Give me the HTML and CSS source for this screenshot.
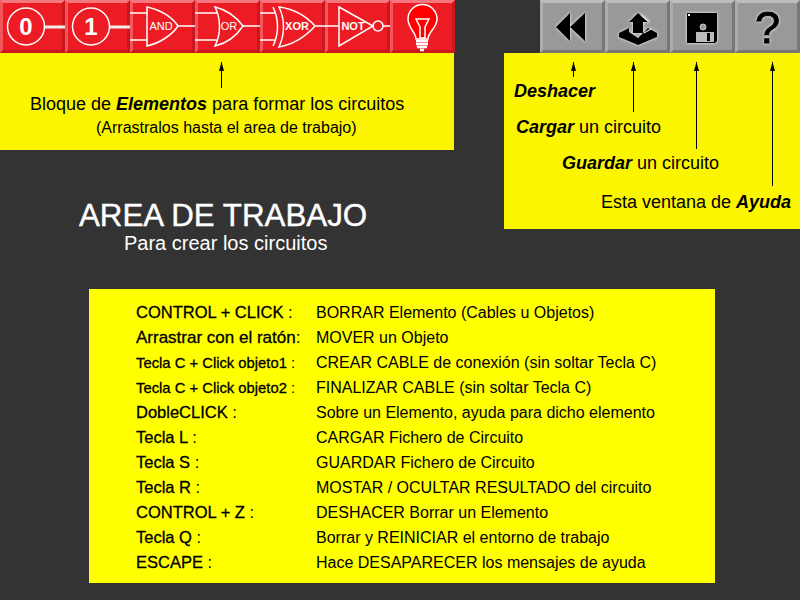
FILE: index.html
```html
<!DOCTYPE html>
<html lang="en">
    <head>
        <meta charset="UTF-8" />
        <title>Circuitos</title>
        <link rel="stylesheet" href="styles.css">
    </head>
    <body>
        <div class="top">
            <div class="left">
                <div class="toolbar">
                    <div class="btn red">
                        <svg class="icon" viewBox="3 3 59 47">
                            <line class="wire thick" x1="45" y1="27" x2="65" y2="27" />
                            <circle class="gate" cx="26" cy="26.5" r="18.5" />
                            <text class="digit" x="26" y="35">0</text>
                        </svg>
                    </div>
                    <div class="btn red">
                        <svg class="icon" viewBox="3 3 59 47">
                            <line class="wire thick" x1="45" y1="27" x2="65" y2="27" />
                            <circle class="gate" cx="26" cy="26.5" r="18.5" />
                            <text class="digit" x="26" y="35">1</text>
                        </svg>
                    </div>
                    <div class="btn red">
                        <svg class="icon" viewBox="3 3 59 47">
                            <path class="wire" d="M0 13H17M0 40H17M48 26H65" />
                            <path class="gate" d="M17 7C30 10 42 17 48 26C42 35 30 43 17 46Z" />
                            <text class="gate-label" x="31" y="30">AND</text>
                        </svg>
                    </div>
                    <div class="btn red">
                        <svg class="icon" viewBox="3 3 59 47">
                            <path class="wire" d="M0 13H23M0 40H23M48 26H65" />
                            <path class="gate" d="M20 7C33 10 42 18 48 26C42 35 33 43 20 46C26 34 26 19 20 7Z" />
                            <text class="gate-label" x="34" y="30">OR</text>
                        </svg>
                    </div>
                    <div class="btn red">
                        <svg class="icon" viewBox="3 3 59 47">
                            <path class="wire" d="M0 13H15M0 40H15M55 26H65" />
                            <path class="gate" d="M13 7C19 19 19 34 13 46" />
                            <path class="gate" d="M19 7C35 9 47 17 55 26C47 35 35 44 19 47C25 34 25 19 19 7Z" />
                            <text class="gate-label strong" x="37" y="30">XOR</text>
                        </svg>
                    </div>
                    <div class="btn red">
                        <svg class="icon" viewBox="3 3 59 47">
                            <path class="wire" d="M0 26H14M58 26H65" />
                            <path class="gate" d="M14 7L48 26L14 46Z" />
                            <circle class="gate" cx="53" cy="26" r="5" />
                            <text class="gate-label strong" x="28" y="30">NOT</text>
                        </svg>
                    </div>
                    <div class="btn red">
                        <svg class="icon" viewBox="3 3 59 47">
                            <path class="bulb" d="M26 39C26 32 18 28 18 19A14.5 14.5 0 0 1 47 19C47 28 38 32 38 39Z" />
                            <path class="filament" d="M26 19H39L35 27V38H30V27Z" />
                            <path class="base" d="M26 41H38M26 44H38M27 47H37M30 50H34" />
                        </svg>
                    </div>
                </div>
                <div class="panel elements">
                    <span class="arrow arrow-elements"></span>
                    <p class="line">Bloque de <em>Elementos</em> para formar los circuitos</p>
                    <p class="line hint">(Arrastralos hasta el area de trabajo)</p>
                </div>
                <h1 class="title">AREA DE TRABAJO</h1>
                <p class="subtitle">Para crear los circuitos</p>
            </div>

            <div class="right">
                <div class="toolbar">
                    <div class="btn gray">
                        <svg class="icon glow" viewBox="3 3 59 47">
                            <path d="M16 27L30 13V41ZM30 27L45 13V41Z" />
                        </svg>
                    </div>
                    <div class="btn gray">
                        <svg class="icon glow" viewBox="3 3 59 47">
                            <path d="M14 33L24 28V32L33 38L43 28L52 33V37L33 45L14 37Z" />
                            <path d="M33 13L43 22H38V33H28V22H24Z" />
                            <path class="cut" d="M36 15L44 22M39 33L46 29" />
                        </svg>
                    </div>
                    <div class="btn gray">
                        <svg class="icon glow" viewBox="3 3 59 47">
                            <path d="M17 13H47V41L45 43H17Z" />
                            <rect class="spot" x="18" y="14" width="2" height="2" />
                            <circle class="hub" cx="33" cy="27" r="3" />
                            <rect class="label" x="26" y="32" width="18" height="10" />
                            <rect x="37" y="33" width="3" height="8" />
                        </svg>
                    </div>
                    <div class="btn gray">
                        <svg class="icon glow" viewBox="3 3 59 47">
                            <text class="question" x="32.5" y="43">?</text>
                        </svg>
                    </div>
                </div>
                <div class="panel tools">
                    <span class="arrow arrow-undo"></span>
                    <span class="arrow arrow-load"></span>
                    <span class="arrow arrow-save"></span>
                    <span class="arrow arrow-help"></span>
                    <p class="line tool-undo"><em>Deshacer</em></p>
                    <p class="line tool-load"><em>Cargar</em> un circuito</p>
                    <p class="line tool-save"><em>Guardar</em> un circuito</p>
                    <p class="line tool-help">Esta ventana de <em>Ayuda</em></p>
                </div>
            </div>
        </div>

        <div class="keys">
            <span class="key"><b>CONTROL + CLICK</b> :</span><span>BORRAR Elemento (Cables u Objetos)</span>
            <span class="key wide"><b>Arrastrar con el ratón</b>:</span><span>MOVER un Objeto</span>
            <span class="key small"><b>Tecla C + Click objeto1</b> :</span><span>CREAR CABLE de conexión (sin soltar Tecla C)</span>
            <span class="key small"><b>Tecla C + Click objeto2</b> :</span><span>FINALIZAR CABLE (sin soltar Tecla C)</span>
            <span class="key"><b>DobleCLICK</b> :</span><span>Sobre un Elemento, ayuda para dicho elemento</span>
            <span class="key"><b>Tecla L</b> :</span><span>CARGAR Fichero de Circuito</span>
            <span class="key"><b>Tecla S</b> :</span><span>GUARDAR Fichero de Circuito</span>
            <span class="key"><b>Tecla R</b> :</span><span>MOSTAR / OCULTAR RESULTADO del circuito</span>
            <span class="key"><b>CONTROL + Z</b> :</span><span>DESHACER Borrar un Elemento</span>
            <span class="key"><b>Tecla Q</b> :</span><span>Borrar y REINICIAR el entorno de trabajo</span>
            <span class="key"><b>ESCAPE</b> :</span><span>Hace DESAPARECER los mensajes de ayuda</span>
        </div>
    </body>
</html>
```

FILE: styles.css
```css
body {
    font-family: "Liberation Sans", Arial, sans-serif;
    background-color: #333333;
    margin: 0;
    padding: 0;
    color: #000000;
    height: 600px;
    overflow: hidden;
}
p,
h1 {
    margin: 0;
}
.top {
    display: flex;
    justify-content: space-between;
}
.toolbar {
    display: flex;
}
.left {
    width: 455px;
}
.right {
    width: 296px;
    display: flex;
    flex-direction: column;
    align-items: flex-end;
}
.btn {
    width: 65px;
    height: 53px;
    border: 3px solid;
    box-sizing: border-box;
}
.red {
    background-color: #ed1c24;
    border-color: #f6777c #c8171e #c8171e #f4565c;
}
.gray {
    background-color: #999999;
    border-color: #bdbdbd #777777 #777777 #adadad;
}
.icon {
    display: block;
    width: 59px;
    height: 47px;
    overflow: visible;
}
.glow {
    filter: drop-shadow(0 0 1.5px #ffffff);
}
.wire {
    stroke: #ffffff;
    stroke-width: 1.5;
    fill: none;
}
.thick {
    stroke: #eeeeee;
    stroke-width: 3;
}
.gate {
    stroke: #ffffff;
    stroke-width: 1.5;
    fill: none;
}
.digit {
    font-size: 24px;
    font-weight: bold;
    fill: #ffffff;
    text-anchor: middle;
}
.gate-label {
    font-size: 11px;
    fill: #ffffff;
    text-anchor: middle;
}
.strong {
    font-weight: bold;
}
.bulb {
    fill: #ff0000;
    stroke: #ffffff;
    stroke-width: 1.5;
}
.filament {
    fill: none;
    stroke: #ffffff;
    stroke-width: 1.5;
}
.base {
    fill: none;
    stroke: #ffffff;
    stroke-width: 2.5;
}
.cut {
    fill: none;
    stroke: #dddddd;
    stroke-width: 1.2;
}
.spot {
    fill: #ffffff;
}
.hub {
    fill: #999999;
    stroke: #cccccc;
    stroke-width: 1;
}
.label {
    fill: #bbbbbb;
}
.question {
    font-size: 45px;
    text-anchor: middle;
    fill: #000000;
    stroke: #000000;
    stroke-width: 1;
}
.panel {
    position: relative;
    background-color: #fbf500;
    box-sizing: border-box;
}
.elements {
    width: 454px;
    height: 97px;
    padding: 41px 0 0 30px;
}
.tools {
    width: 296px;
    height: 176px;
    padding-top: 28px;
}
.line {
    font-size: 18px;
    line-height: 20px;
    white-space: nowrap;
}
em {
    font-weight: bold;
    font-style: italic;
}
.hint {
    font-size: 16px;
    margin: 4px 0 0 66px;
}
.tool-undo {
    padding-left: 10px;
}
.tool-load {
    padding-left: 12px;
    margin-top: 16px;
}
.tool-save {
    padding-left: 58px;
    margin-top: 16px;
}
.tool-help {
    padding-left: 97px;
    margin-top: 19px;
}
.arrow {
    position: absolute;
    top: 9px;
    width: 1px;
    background-color: #000000;
}
.arrow::before {
    content: "";
    position: absolute;
    top: 0;
    left: -2px;
    width: 5px;
    height: 9px;
    background-color: #000000;
    clip-path: polygon(50% 0, 100% 100%, 0 100%);
}
.arrow-elements {
    left: 221px;
    height: 26px;
}
.arrow-undo {
    left: 69px;
    height: 15px;
}
.arrow-load {
    left: 129px;
    height: 50px;
}
.arrow-save {
    left: 192px;
    height: 87px;
}
.arrow-help {
    left: 268px;
    height: 124px;
}
.title {
    font-size: 31.3px;
    font-weight: normal;
    line-height: 34px;
    color: #ffffff;
    -webkit-text-stroke: 0.4px #ffffff;
    margin-top: 49px;
    padding-left: 79px;
}
.subtitle {
    font-size: 20px;
    line-height: 22px;
    color: #ffffff;
    padding-left: 124px;
    margin-top: -1px;
}
.keys {
    display: grid;
    grid-template-columns: 180px 1fr;
    grid-auto-rows: 25px;
    align-items: center;
    width: 626px;
    height: 294px;
    box-sizing: border-box;
    margin: 35px 0 0 89px;
    padding: 11px 0 0 47px;
    background-color: #ffff00;
    font-size: 16px;
    white-space: nowrap;
}
.key {
    font-size: 16.5px;
}
.key b {
    font-weight: normal;
    -webkit-text-stroke: 0.3px #000000;
}
.wide {
    font-size: 17px;
}
.small {
    font-size: 14.8px;
}
```
